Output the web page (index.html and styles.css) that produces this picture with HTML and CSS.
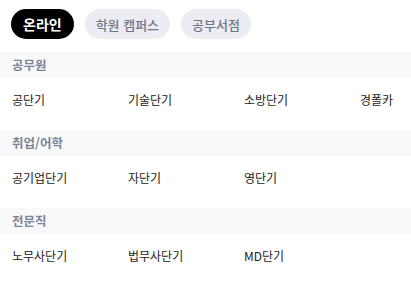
FILE: index.html
```html
<!DOCTYPE html>
<html lang="ko">
<head>
<meta charset="utf-8">
<link rel="stylesheet" href="styles.css">
</head>
<body>
<div class="tabs">
  <span class="tab active">온라인</span>
  <span class="tab">학원 캠퍼스</span>
  <span class="tab">공부서점</span>
</div>
<div class="section">
  <div class="band">공무원</div>
  <div class="row">
    <span>공단기</span><span>기술단기</span><span>소방단기</span><span>경폴카</span>
  </div>
</div>
<div class="section">
  <div class="band">취업/어학</div>
  <div class="row">
    <span>공기업단기</span><span>자단기</span><span>영단기</span>
  </div>
</div>
<div class="section">
  <div class="band">전문직</div>
  <div class="row">
    <span>노무사단기</span><span>법무사단기</span><span>MD단기</span>
  </div>
</div>
</body>
</html>
```
FILE: styles.css
```css
html, body {
  margin: 0;
  padding: 0;
  background: #fff;
  font-family: "Noto Sans CJK KR", "Noto Sans", sans-serif;
}
.tabs {
  display: flex;
  gap: 11px;
  padding: 9px 11px 0;
  height: 30px;
  margin-bottom: 13px;
}
.tab {
  display: flex;
  align-items: center;
  height: 30px;
  padding: 0 11px;
  border-radius: 15px;
  background: #ecedf3;
  color: #70768a;
  font-size: 13px;
  font-weight: 500;
  white-space: nowrap;
}
.tab.active {
  background: #000;
  color: #fff;
  font-weight: 700;
  font-size: 14px;
  padding: 0 12px;
}
.band {
  height: 26px;
  line-height: 26px;
  padding-left: 12px;
  background: #f8f9fb;
  color: #7d8594;
  font-size: 12.5px;
  font-weight: 700;
}
.row {
  display: grid;
  grid-template-columns: 116px 116px 116px auto;
  height: 52px;
  padding: 12px 0 0 12px;
  box-sizing: border-box;
  font-size: 12px;
  line-height: 20px;
  color: #222;
}
```
